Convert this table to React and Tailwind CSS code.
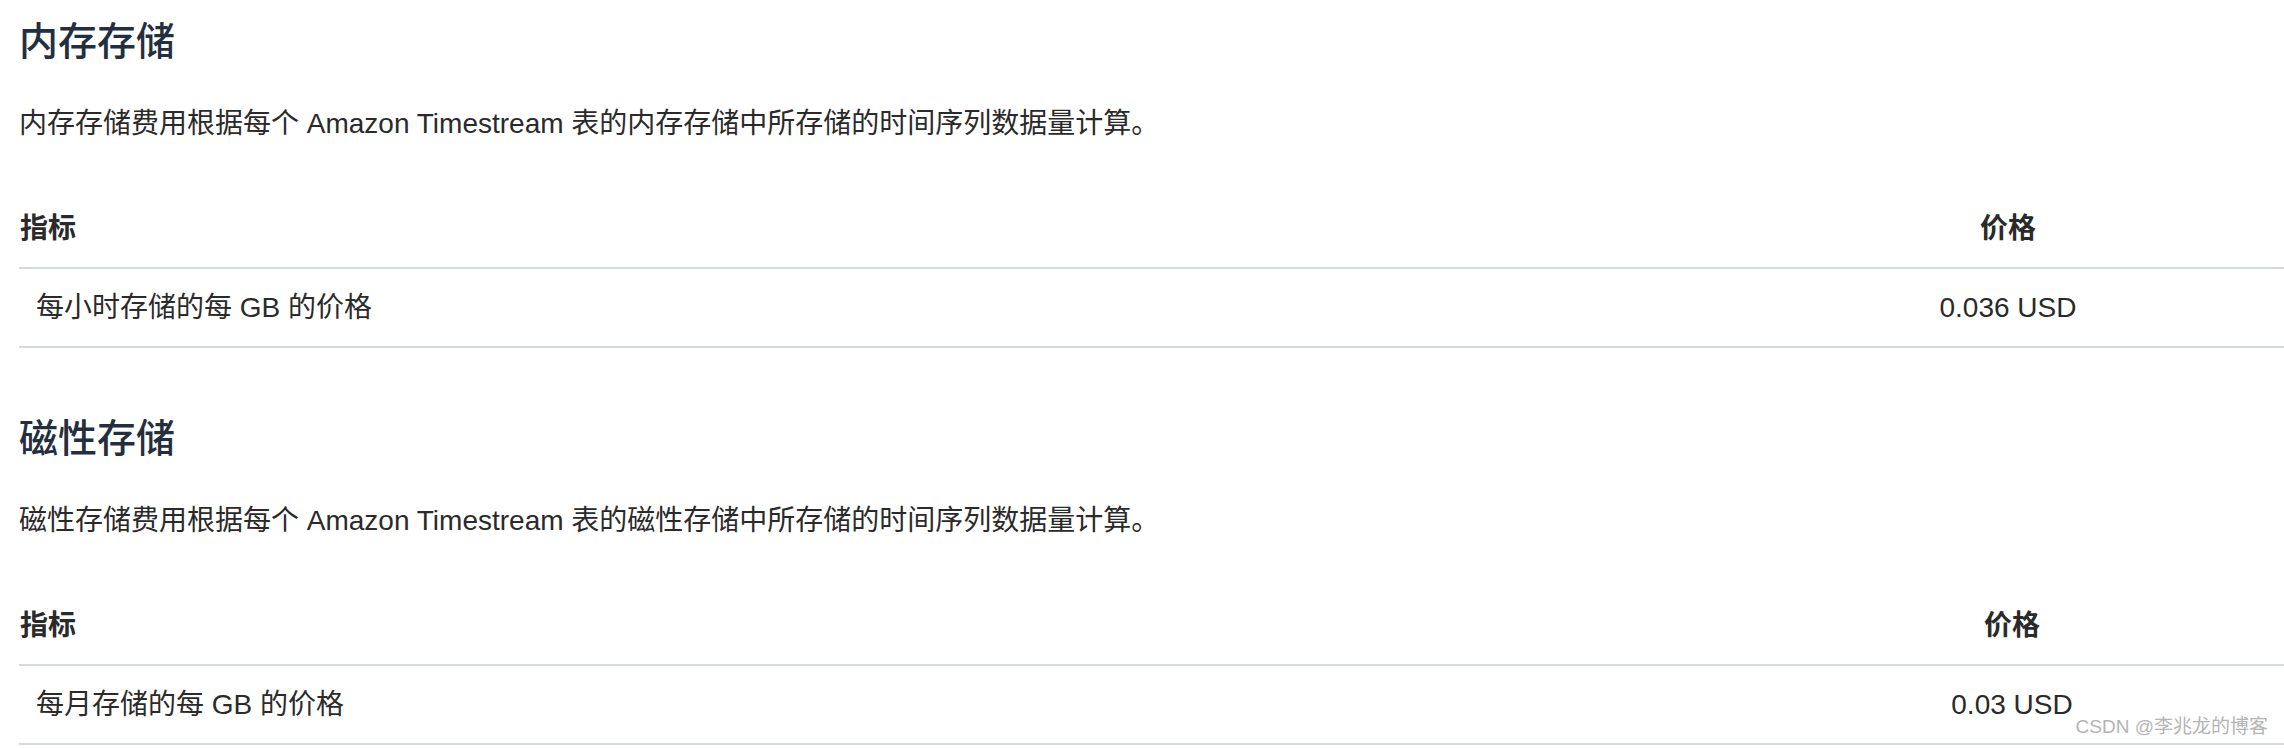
const sections = [
  {
    title: '内存存储',
    desc: '内存存储费用根据每个 Amazon Timestream 表的内存存储中所存储的时间序列数据量计算。',
    metric: '每小时存储的每 GB 的价格',
    price: '0.036 USD',
    priceCol: 'w-[552px]',
  },
  {
    title: '磁性存储',
    desc: '磁性存储费用根据每个 Amazon Timestream 表的磁性存储中所存储的时间序列数据量计算。',
    metric: '每月存储的每 GB 的价格',
    price: '0.03 USD',
    priceCol: 'w-[544px]',
  },
];

function PricingSection({ title, desc, metric, price, priceCol }) {
  return (
    <section>
      <h3 className="h-[56px] text-[39px] leading-[56px] font-medium text-[#232f3e]">{title}</h3>
      <p className="mt-[34px] text-[28px] leading-[40px] text-[#2a2a2a]">{desc}</p>

      {/* pricing table */}
      <div className="mt-[46px] text-[28px] text-[#2a2a2a]">
        <div className="flex h-[79px] items-center border-b-2 border-[#d5dbdb] font-bold">
          <div className="flex-1 pl-px">指标</div>
          <div className={`${priceCol} text-center`}>价格</div>
        </div>
        <div className="flex h-[79px] items-center border-b-2 border-[#d5dbdb]">
          <div className="flex-1 pl-[17px]">{metric}</div>
          <div className={`${priceCol} text-center`}>{price}</div>
        </div>
      </div>
    </section>
  );
}

export default function App() {
  return (
    <div
      className="relative h-[748px] w-[2284px] overflow-hidden bg-white pl-[19px] pt-[14px]"
      style={{ fontFamily: '"Liberation Sans", "Noto Sans CJK SC", sans-serif' }}
    >
      <div className="flex flex-col gap-[63px]">
        {sections.map((s) => (
          <PricingSection key={s.title} {...s} />
        ))}
      </div>

      {/* watermark */}
      <div className="absolute right-[16px] top-[714px] text-[19px] leading-[26px] text-[#b4b4b4]">
        CSDN @李兆龙的博客
      </div>
    </div>
  );
}
